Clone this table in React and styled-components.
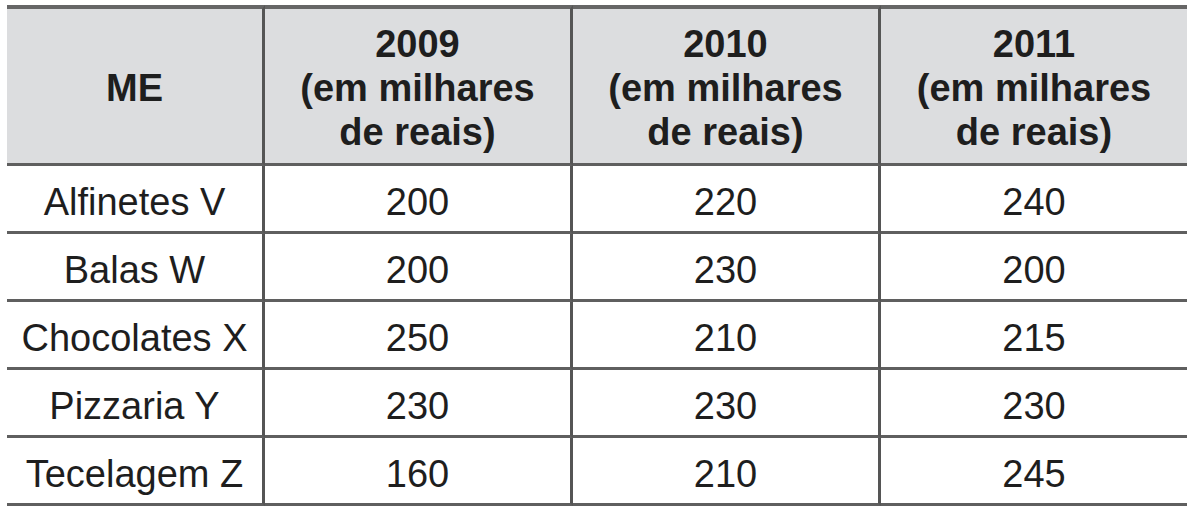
import React from 'react'
import styled, { createGlobalStyle, css } from 'styled-components'

const GlobalStyle = createGlobalStyle`
  html, body {
    margin: 0;
    padding: 0;
    background: #ffffff;
  }
  body {
    font-family: "Liberation Sans", Arial, sans-serif;
    color: #1e1e1e;
  }
`

const Frame = styled.div`
  padding: 5px 13px 0 7px;
`

const Grid = styled.div`
  display: grid;
  grid-template-columns: 258px 308px 308px 306px;
  width: 1180px;
`

const Cell = styled.div`
  box-sizing: border-box;
  display: flex;
  align-items: center;
  justify-content: center;
  text-align: center;
  height: 68px;
  padding-top: 8px;
  font-size: 38px;
  line-height: 1.15;
  border-bottom: 3px solid #5f5f5f;
  border-right: ${p => (p.last ? 'none' : '3px solid #555')};

  ${p => p.head && css`
    height: 161px;
    background: #dcdddf;
    font-weight: bold;
    border-top: 4px solid #666;
    padding-top: 6px;
  `}
`

const columns = ['ME', '2009', '2010', '2011']

const rows = [
  ['Alfinetes V', 200, 220, 240],
  ['Balas W', 200, 230, 200],
  ['Chocolates X', 250, 210, 215],
  ['Pizzaria Y', 230, 230, 230],
  ['Tecelagem Z', 160, 210, 245],
]

export default function App() {
  return (
    <Frame>
      <GlobalStyle />
      <Grid>
        {columns.map((c, i) => (
          <Cell head key={c} last={i === columns.length - 1}>
            {i === 0 ? c : (
              <span>{c}<br />(em milhares<br />de reais)</span>
            )}
          </Cell>
        ))}
        {rows.map(r =>
          r.map((v, i) => (
            <Cell key={r[0] + i} last={i === r.length - 1}>{v}</Cell>
          ))
        )}
      </Grid>
    </Frame>
  )
}
